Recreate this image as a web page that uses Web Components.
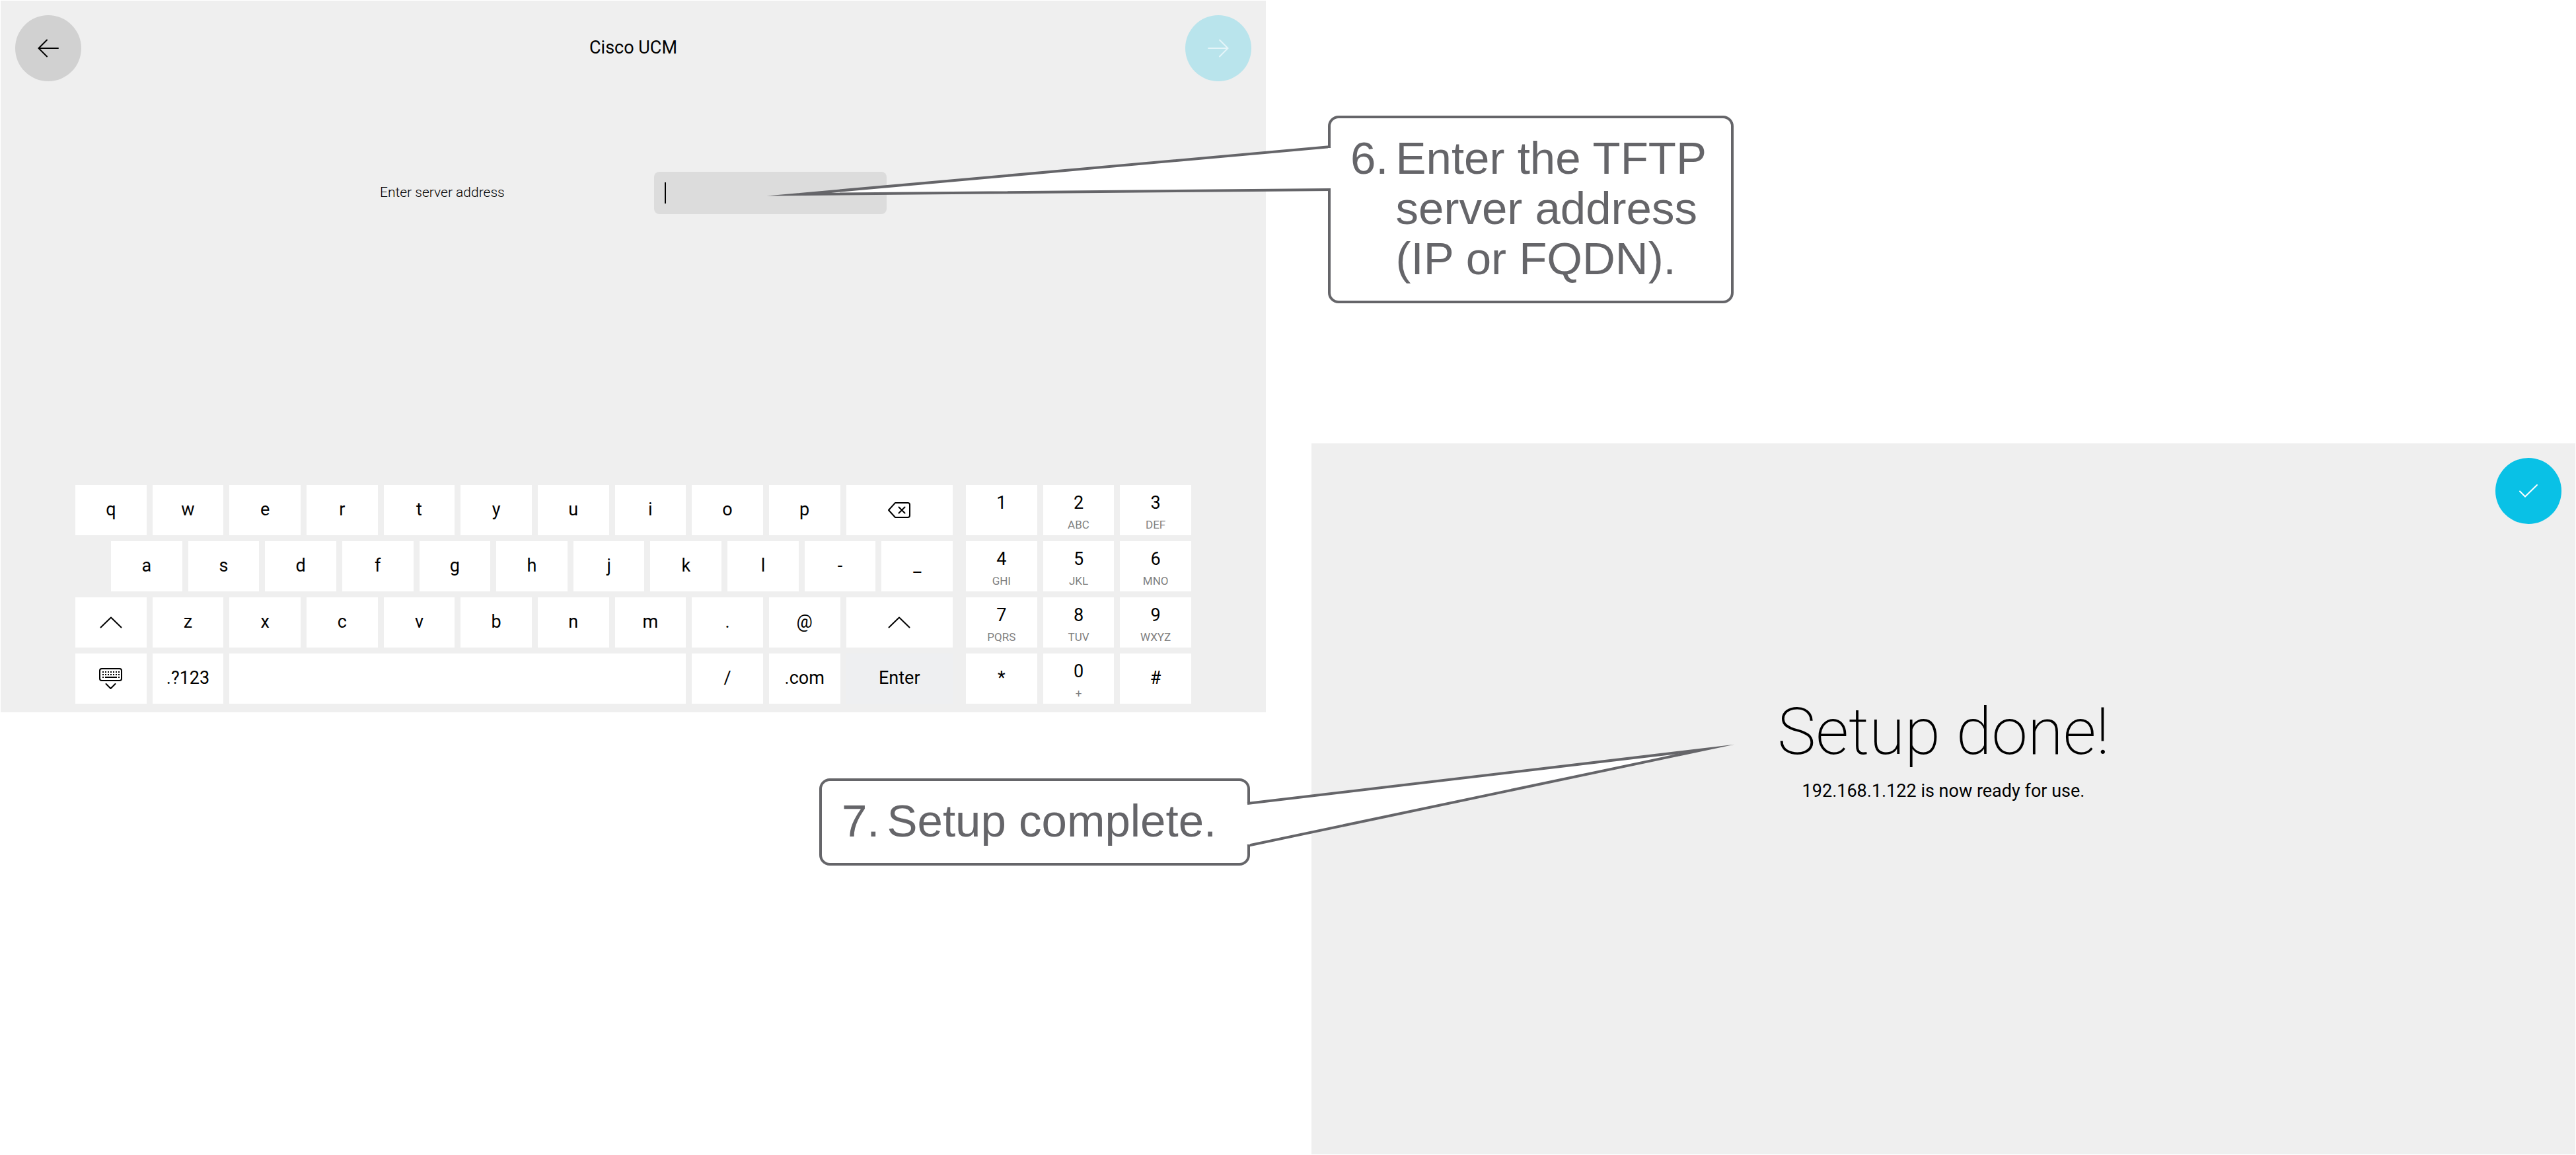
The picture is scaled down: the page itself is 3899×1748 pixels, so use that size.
<!DOCTYPE html>
<html lang="en">
<head>
<meta charset="utf-8">
<meta name="viewport" content="width=device-width, initial-scale=1">
<title>Device setup</title>
<style>
  body { margin: 0; background: #fff; font-family: Roboto, "Open Sans", sans-serif; color: #000; }
</style>
</head>
<body>
<setup-guide></setup-guide>
<script>
const define = (name, html, setup) => {
  const template = document.createElement('template');
  template.innerHTML = html;
  customElements.define(name, class extends HTMLElement {
    constructor() {
      super();
      this.attachShadow({ mode: 'open' }).append(template.content.cloneNode(true));
    }
    connectedCallback() { if (setup) setup(this, this.shadowRoot); }
  });
};

const icons = {
  back: '<svg width="32" height="28" viewBox="0 0 32 28"><path d="M31 14H2M14 1.5 1.5 14 14 26.500"/></svg>',
  next: '<svg width="32" height="28" viewBox="0 0 32 28"><path d="M1 14h29M18 1.500 30.500 14 18 26.500"/></svg>',
  done: '<svg width="30" height="22" viewBox="0 0 30 22"><path d="M2 11.500 10 19.500 28 2"/></svg>',
  shift: '<svg width="34" height="18" viewBox="0 0 34 18"><path d="M1.500 16.500 17 1.500 32.500 16.500"/></svg>',
  erase: '<svg width="34" height="24" viewBox="0 0 34 24"><path d="M11 1H30a3 3 0 0 1 3 3v16a3 3 0 0 1-3 3H11L1 12Z M16.500 7.500l9 9M25.500 7.500l-9 9"/></svg>',
  hide: '<svg width="35" height="32" viewBox="0 0 35 32"><rect x="1" y="1" width="33" height="18" rx="3"/><path stroke-linecap="butt" stroke-dasharray="2 2" d="M5 6h26M5 10h26"/><path stroke-linecap="butt" d="M5 14h2M9 14h18M29 14h2"/><path d="M10.500 24l7 7 7-7"/></svg>'
};
const names = { back: 'Back', next: 'Next', done: 'Finish', shift: 'Shift', erase: 'Backspace', hide: 'Hide keyboard' };

define('round-button', `
  <style>
    :host { display: block; flex: none; }
    button { display: grid; place-items: center; width: 100px; height: 100px; padding: 0; border: 0; border-radius: 50%; background: #d1d1d1; color: #000; }
    svg { fill: none; stroke: currentColor; stroke-width: 2; stroke-linecap: round; }
    :host([icon=next]) button { background: #b9e4ec; color: #e4f5f9; }
    :host([icon=done]) button { background: #09c1e6; color: #fff; }
  </style>
  <button type="button"></button>`, (host, root) => {
  const button = root.querySelector('button');
  button.innerHTML = icons[host.getAttribute('icon')];
  button.setAttribute('aria-label', names[host.getAttribute('icon')]);
});

define('key-cap', `
  <style>
    :host { display: flex; flex: 1 1 0; min-width: 0; }
    button { display: flex; flex-direction: column; align-items: center; justify-content: center; flex: 1; min-width: 0; height: 76px; padding: 0 0 2px; border: 0; background: #fff; color: #000; font: 400 27px/32px Roboto, sans-serif; }
    small { height: 20px; font-size: 17px; line-height: 20px; font-weight: 400; color: #808080; }
    svg { overflow: visible; fill: none; stroke: currentColor; stroke-width: 2; stroke-linecap: round; stroke-linejoin: round; }
    :host([icon]) button { padding: 0; }
    :host([sub]) button { justify-content: flex-start; gap: 7px; padding: 11px 0 0; }
    :host([muted]) button { background: #eeeff1; }
  </style>
  <button type="button"></button>`, (host, root) => {
  const button = root.querySelector('button');
  const icon = host.getAttribute('icon');
  if (icon) {
    button.innerHTML = icons[icon];
    button.setAttribute('aria-label', names[icon]);
    return;
  }
  const label = document.createElement('span');
  label.textContent = host.getAttribute('label') || '';
  button.append(label);
  if (!label.textContent) button.setAttribute('aria-label', 'Space');
  if (host.hasAttribute('sub')) {
    const sub = document.createElement('small');
    sub.textContent = host.getAttribute('sub');
    button.append(sub);
  }
});

define('touch-keyboard', `
  <style>
    :host { display: flex; gap: 20px; padding: 0 113px 13px; }
    .letters, .digits { display: flex; flex-direction: column; gap: 9px; }
    .letters { flex: 1328 1 0; }
    .digits { flex: 341 1 0; }
    .row { display: grid; grid-template-columns: repeat(10, 2fr) 3fr; column-gap: 9px; }
    .row.shifted { display: flex; gap: 9px; padding-left: 54px; }
    .digits .row { grid-template-columns: repeat(3, 1fr); }
    .space { grid-column: span 6; }
  </style>
  <div class="letters"></div>
  <div class="digits"></div>`, (host, root) => {
  const key = text => {
    const cap = document.createElement('key-cap');
    if (text.startsWith('icon:')) cap.setAttribute('icon', text.slice(5));
    else cap.setAttribute('label', text === 'space' ? '' : text);
    if (text === 'space') cap.className = 'space';
    if (text === 'Enter') cap.setAttribute('muted', '');
    return cap;
  };
  const row = (parent, caps, cls = '') => {
    const line = document.createElement('div');
    line.className = 'row ' + cls;
    line.append(...caps);
    root.querySelector(parent).append(line);
  };
  row('.letters', 'q w e r t y u i o p icon:erase'.split(' ').map(key));
  row('.letters', 'a s d f g h j k l - _'.split(' ').map(key), 'shifted');
  row('.letters', 'icon:shift z x c v b n m . @ icon:shift'.split(' ').map(key));
  row('.letters', 'icon:hide .?123 space / .com Enter'.split(' ').map(key));
  const digit = ([label, sub]) => {
    const cap = key(label);
    if (sub !== undefined) cap.setAttribute('sub', sub);
    return cap;
  };
  row('.digits', [['1', ''], ['2', 'ABC'], ['3', 'DEF']].map(digit));
  row('.digits', [['4', 'GHI'], ['5', 'JKL'], ['6', 'MNO']].map(digit));
  row('.digits', [['7', 'PQRS'], ['8', 'TUV'], ['9', 'WXYZ']].map(digit));
  row('.digits', [['*'], ['0', '+'], ['#']].map(digit));
});

define('server-screen', `
  <style>
    :host { display: flex; flex-direction: column; min-height: 1077px; background: #efefef; }
    header { display: flex; justify-content: space-between; padding: 22px; }
    h1 { margin: 0; font-size: 27px; line-height: 98px; font-weight: 400; }
    form { display: flex; align-items: center; padding: 115px 574px 0; }
    label { flex: 1; font-size: 21px; line-height: 28px; font-weight: 350; padding-bottom: 2px; }
    .field { display: flex; align-items: center; width: 352px; height: 64px; box-sizing: border-box; padding: 0 16px; border-radius: 8px; background: #dcdcdc; }
    .caret { width: 2px; height: 32px; background: #000; }
    input { flex: 1; min-width: 0; height: 32px; padding: 0; border: 0; outline: 0; background: none; font: 400 27px/32px Roboto, sans-serif; }
    touch-keyboard { margin-top: auto; }
  </style>
  <header>
    <round-button icon="back"></round-button>
    <h1>Cisco UCM</h1>
    <round-button icon="next"></round-button>
  </header>
  <form>
    <label for="server">Enter server address</label>
    <div class="field"><span class="caret"></span><input id="server" type="text"></div>
  </form>
  <touch-keyboard></touch-keyboard>`);

define('done-screen', `
  <style>
    :host { display: flex; flex-direction: column; min-height: 1076px; background: #efefef; }
    header { display: flex; justify-content: flex-end; padding: 22px 21px; }
    section { padding-top: 233px; text-align: center; }
    h2 { margin: 0; font-size: 98px; line-height: 120px; font-weight: 200; }
    p { margin: 13px 0 0; font-size: 27px; line-height: 32px; font-weight: 400; }
  </style>
  <header><round-button icon="done"></round-button></header>
  <section>
    <h2>Setup done!</h2>
    <p>192.168.1.122 is now ready for use.</p>
  </section>`);

define('step-callout', `
  <style>
    :host { display: block; box-sizing: border-box; border: 4px solid #656569; border-radius: 16px; background: #fff; color: #656569; font: 69px/76px "Liberation Sans", Arial, sans-serif; }
    .body { display: flex; gap: 11px; padding: 23px 30px 25px; white-space: nowrap; }
    ::slotted(svg) { position: absolute; overflow: visible; fill: #fff; stroke: #656569; stroke-width: 4; stroke-miterlimit: 100; }
  </style>
  <slot name="tail"></slot>
  <div class="body"><span class="number"></span><div><slot></slot></div></div>`, (host, root) => {
  root.querySelector('.number').textContent = host.getAttribute('number') + '.';
});

define('setup-guide', `
  <style>
    :host { display: grid; position: relative; grid-template-columns: 1915fr 1913fr; column-gap: 69px; padding: 1px; align-items: start; }
    done-screen { margin-top: 670px; }
    step-callout { position: absolute; }
    .address { left: 2010px; top: 175px; width: 614px; }
    .complete { left: 1240px; top: 1178px; width: 652px; }
    .address svg { left: -4px; top: 0; }
    .complete svg { left: 644px; top: 0; }
  </style>
  <server-screen></server-screen>
  <done-screen></done-screen>
  <step-callout class="address" number="6">
    <svg slot="tail" width="8" height="120" aria-hidden="true"><path d="M4 43-800 115 4 108"/><path stroke="none" d="M0 45h6v61H0Z"/></svg>
    Enter the TFTP<br>server address<br>(IP or FQDN).
  </step-callout>
  <step-callout class="complete" number="7">
    <svg slot="tail" width="8" height="120" aria-hidden="true"><path d="M0 34 693-48 0 98"/><path stroke="none" d="M-2 36h6v60h-6Z"/></svg>
    Setup complete.
  </step-callout>`);
</script>
</body>
</html>
